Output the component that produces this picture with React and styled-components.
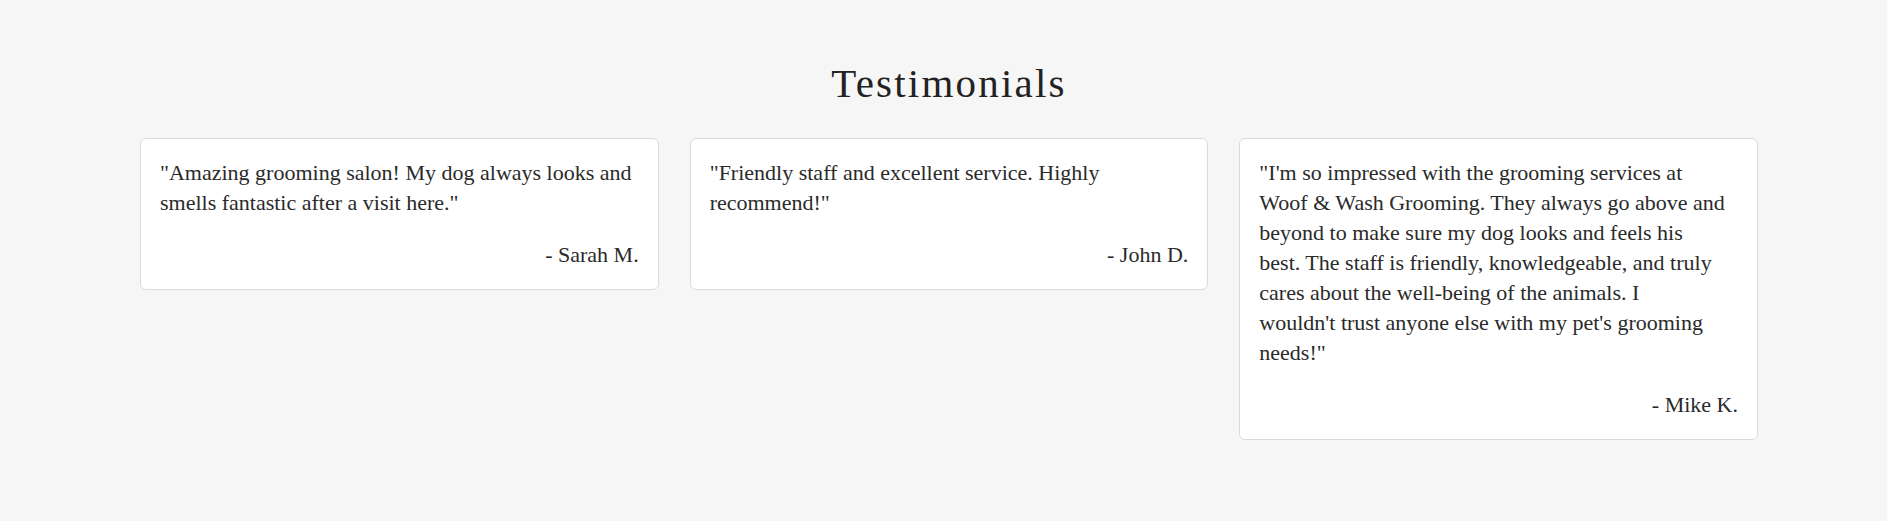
import React from "react";
import styled, { createGlobalStyle } from "styled-components";

const GlobalStyle = createGlobalStyle`
  html, body {
    margin: 0;
    padding: 0;
    background: #f6f6f6;
  }
  body {
    font-family: "Liberation Serif", "Times New Roman", serif;
    color: #2a2a2a;
  }
`;

const Section = styled.section`
  padding: 59px 129px 40px 140px;
`;

const Title = styled.h2`
  margin: 0 0 30px;
  font-size: 41px;
  line-height: 1.2;
  font-weight: 400;
  letter-spacing: 2.2px;
  text-align: center;
  color: #222;
`;

const Grid = styled.div`
  display: grid;
  grid-template-columns: repeat(3, 1fr);
  gap: 31px;
  align-items: start;
`;

const Card = styled.article`
  background: #fff;
  border: 1px solid #dadada;
  border-radius: 6px;
  padding: 19px;
`;

const Quote = styled.p`
  margin: 0 0 22px;
  font-size: 22px;
  line-height: 30px;
  color: #2a2a2a;
`;

const Author = styled.p`
  margin: 0;
  font-size: 22px;
  line-height: 30px;
  text-align: right;
  color: #2a2a2a;
`;

const testimonials = [
  {
    lines: [
      '"Amazing grooming salon! My dog always looks and',
      'smells fantastic after a visit here."',
    ],
    author: "- Sarah M.",
  },
  {
    lines: ['"Friendly staff and excellent service. Highly', 'recommend!"'],
    author: "- John D.",
  },
  {
    lines: [
      "\"I'm so impressed with the grooming services at",
      "Woof & Wash Grooming. They always go above and",
      "beyond to make sure my dog looks and feels his",
      "best. The staff is friendly, knowledgeable, and truly",
      "cares about the well-being of the animals. I",
      "wouldn't trust anyone else with my pet's grooming",
      'needs!"',
    ],
    author: "- Mike K.",
  },
];

export default function App() {
  return (
    <>
      <GlobalStyle />
      <Section>
        <Title>Testimonials</Title>
        <Grid>
          {testimonials.map((t) => (
            <Card key={t.author}>
              <Quote>
                {t.lines.map((l, i) => (
                  <React.Fragment key={i}>
                    {i > 0 && <br />}
                    {l}
                  </React.Fragment>
                ))}
              </Quote>
              <Author>{t.author}</Author>
            </Card>
          ))}
        </Grid>
      </Section>
    </>
  );
}
